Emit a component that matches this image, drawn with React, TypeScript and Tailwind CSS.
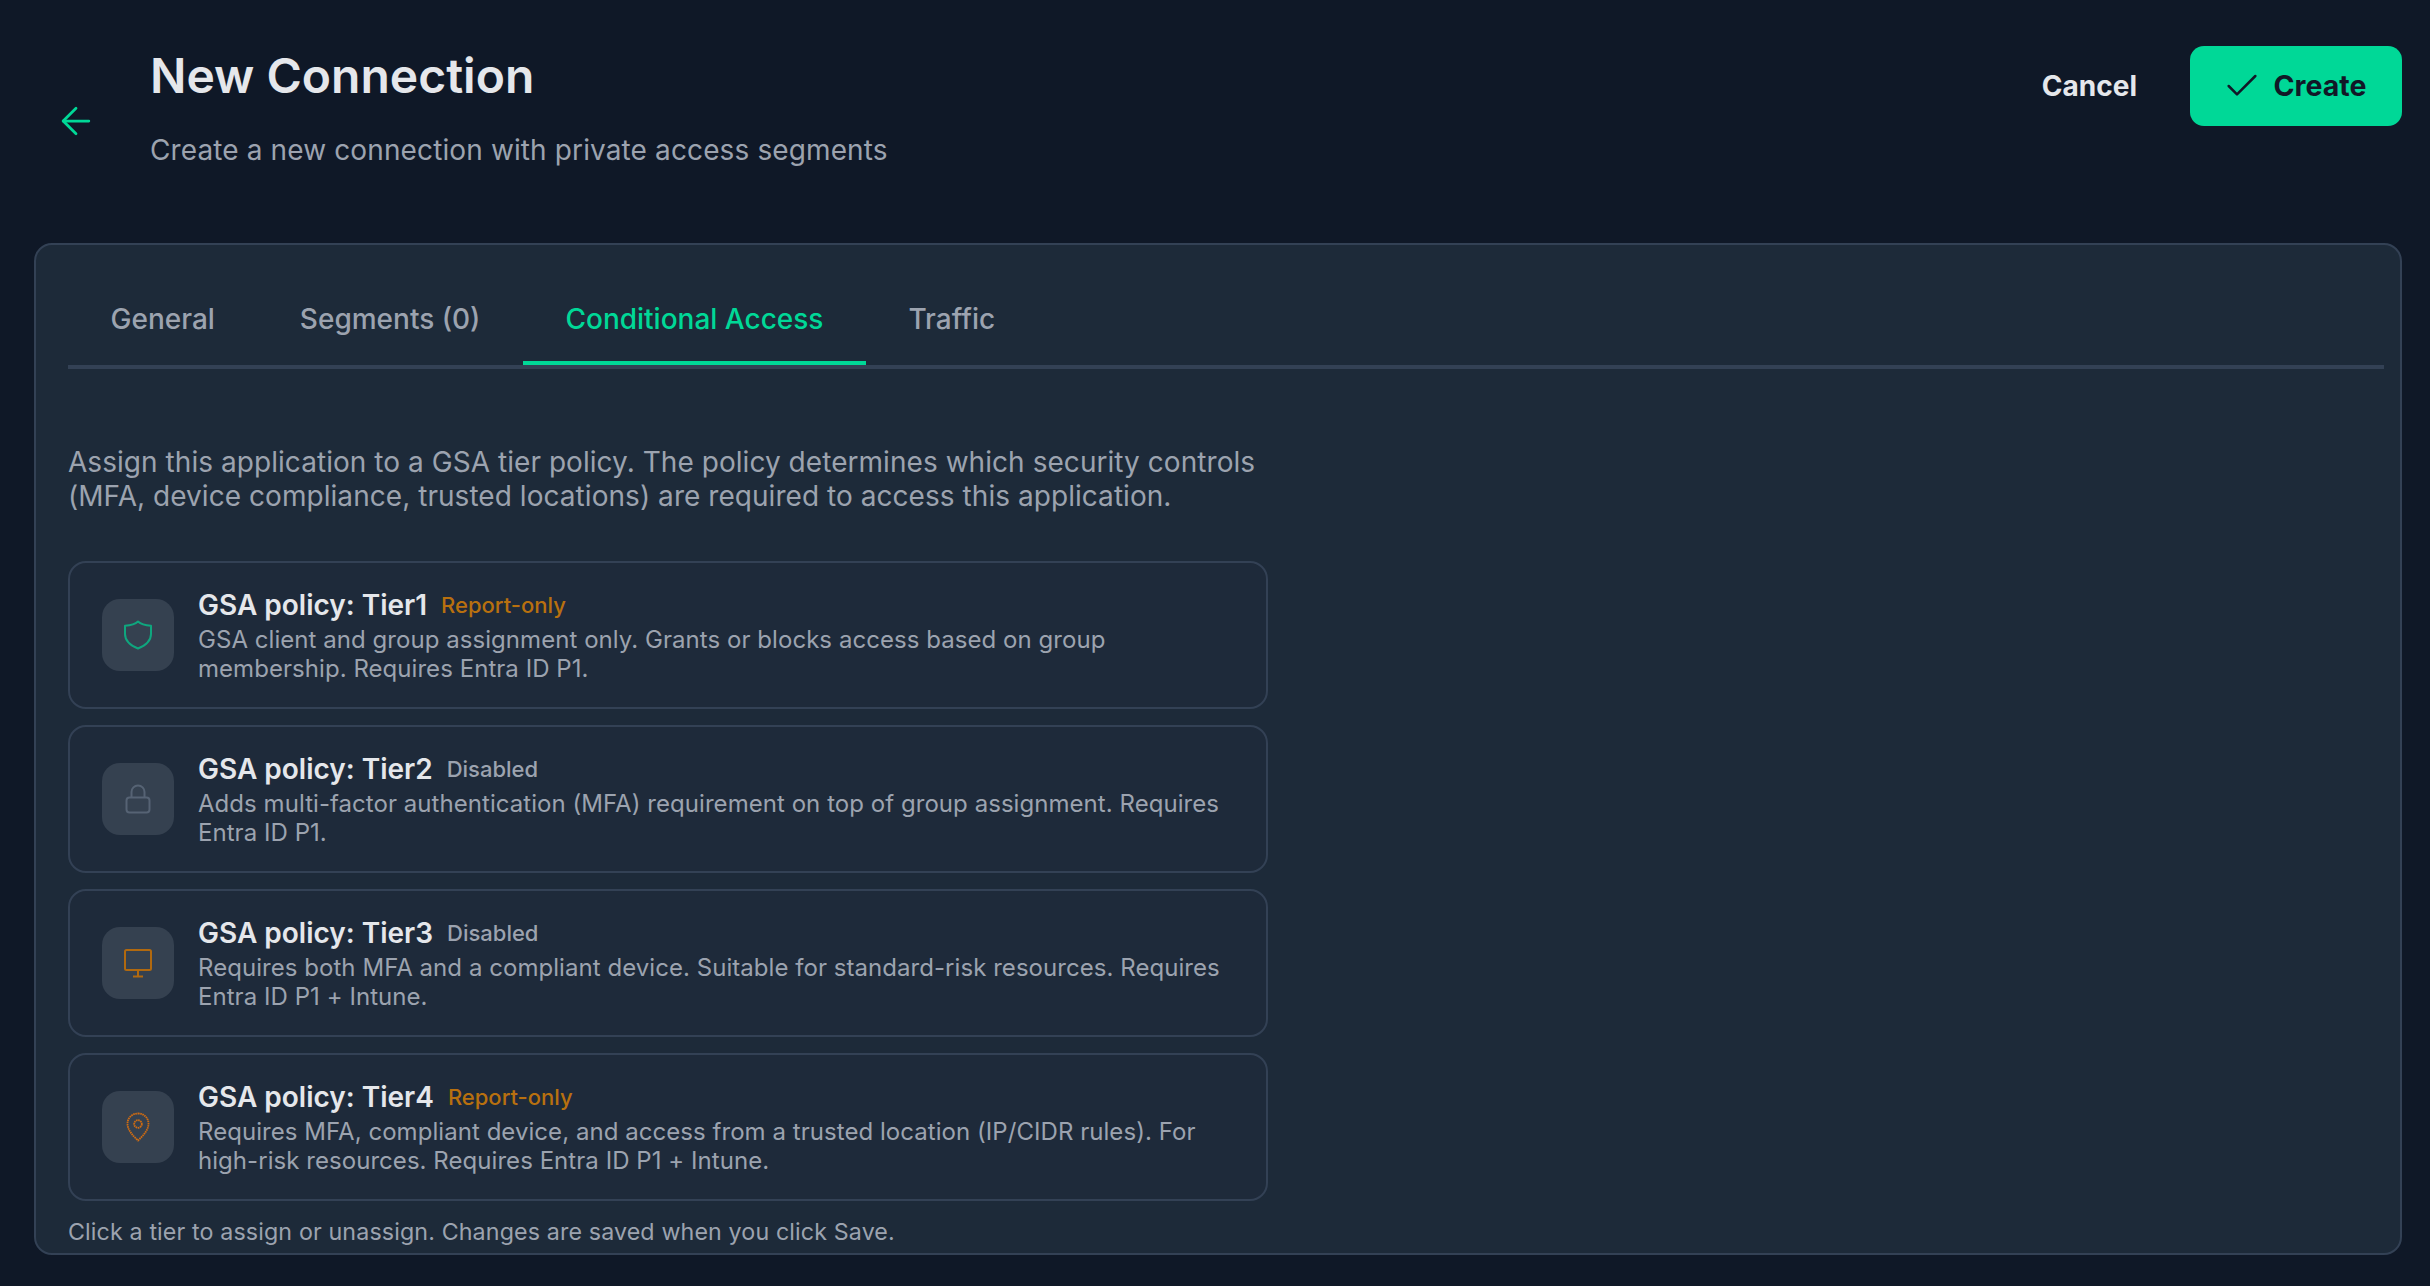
import { ArrowLeft, Check } from 'lucide-react';
import type { ReactNode } from 'react';

const tabs = [
  { label: 'General', active: false },
  { label: 'Segments (0)', active: false },
  { label: 'Conditional Access', active: true },
  { label: 'Traffic', active: false },
];

const ShieldIcon = () => (
  <svg className="w-[30px] h-[30px] text-[#0fa67e]" viewBox="0 0 30 30" fill="none" stroke="currentColor" strokeWidth="2" strokeLinejoin="round">
    <path d="M15 1.500c3 2.800 7.500 3.800 13 4.200V14c0 6.600-5.400 11.400-13 14.500C7.400 25.400 2 20.600 2 14V5.700C7.500 5.300 12 4.300 15 1.500z" />
  </svg>
);

const LockIcon = () => (
  <svg className="w-[30px] h-[30px] text-[#566374]" viewBox="0 0 30 30" fill="none" stroke="currentColor" strokeWidth="2" strokeLinejoin="round">
    <rect x="3.500" y="13.500" width="23" height="15" rx="3" />
    <path d="M8.500 13.500V8a6.500 6.500 0 0 1 13 0v5.500" />
  </svg>
);

const MonitorIcon = () => (
  <svg className="w-[30px] h-[30px] text-[#b1690f]" viewBox="0 0 30 30" fill="none" stroke="currentColor" strokeWidth="2" strokeLinejoin="round">
    <rect x="2" y="2" width="26" height="20" rx="1.500" />
    <path d="M15 22v6M10 28.500h10" />
  </svg>
);

const PinIcon = () => (
  <svg className="w-[30px] h-[30px] text-[#d06c12]" viewBox="0 0 30 30" fill="none" stroke="currentColor" strokeWidth="1.800" strokeDasharray="1.600 0.600">
    <path d="M15 1.500c6 0 10.500 4.400 10.500 10.200 0 6-5 11.800-10.500 16.800C9.500 23.500 4.500 17.700 4.500 11.700 4.500 5.900 9 1.500 15 1.500z" />
    <circle cx="15" cy="12" r="3.800" />
  </svg>
);

type Tier = {
  name: string;
  status: string;
  statusClass: string;
  desc: string;
  icon: ReactNode;
};

const tiers: Tier[] = [
  {
    name: 'GSA policy: Tier1',
    status: 'Report-only',
    statusClass: 'text-[#b8700f]',
    desc: 'GSA client and group assignment only. Grants or blocks access based on group membership. Requires Entra ID P1.',
    icon: <ShieldIcon />,
  },
  {
    name: 'GSA policy: Tier2',
    status: 'Disabled',
    statusClass: 'text-[#9ca3af]',
    desc: 'Adds multi-factor authentication (MFA) requirement on top of group assignment. Requires Entra ID P1.',
    icon: <LockIcon />,
  },
  {
    name: 'GSA policy: Tier3',
    status: 'Disabled',
    statusClass: 'text-[#9ca3af]',
    desc: 'Requires both MFA and a compliant device. Suitable for standard-risk resources. Requires Entra ID P1 + Intune.',
    icon: <MonitorIcon />,
  },
  {
    name: 'GSA policy: Tier4',
    status: 'Report-only',
    statusClass: 'text-[#b8700f]',
    desc: 'Requires MFA, compliant device, and access from a trusted location (IP/CIDR rules). For high-risk resources. Requires Entra ID P1 + Intune.',
    icon: <PinIcon />,
  },
];

export default function App() {
  return (
    <div className="h-[1286px] w-[2430px] overflow-hidden bg-[#0f1827] pl-[34px] pr-[28px] font-['Inter','Liberation_Sans',sans-serif] font-features-['cv11','ss03']">
      {/* Header */}
      <header className="flex h-[243px] items-start justify-between">
        <div className="flex items-start">
          <button className="ml-[20px] mt-[99px] text-[#00d897]">
            <ArrowLeft size={44} strokeWidth={1.5} />
          </button>
          <div className="ml-[52px] mt-[47px]">
            <h1 className="text-[48px] font-semibold leading-[58px] text-[#e5e7eb]">New Connection</h1>
            <p className="mt-[27px] text-[28px] leading-[36px] tracking-[0.12px] text-[#9ca3af]">
              Create a new connection with private access segments
            </p>
          </div>
        </div>
        <div className="mt-[46px] flex items-center gap-[53px]">
          <button className="text-[28px] font-bold text-[#e5e7eb]">Cancel</button>
          <button className="flex h-[80px] w-[212px] items-center justify-center gap-[12px] rounded-[14px] bg-[#00d897] pr-[4px] text-[28.5px] font-bold text-[#111827]">
            <Check size={40} strokeWidth={1.5} />
            Create
          </button>
        </div>
      </header>

      {/* Panel */}
      <section className="h-[1012px] rounded-[18px] border-2 border-[#334155] bg-[#1d2a39] pl-[32px] pr-[16px]">
        <div className="flex border-b-4 border-[#334155] pt-[54px]">
          {tabs.map((tab) => (
            <div
              key={tab.label}
              className={
                tab.active
                  ? 'border-b-4 border-[#00d897] px-[42.5px] pb-[22px] text-[28px] font-medium leading-[40px] text-[#00d897]'
                  : 'border-b-4 border-transparent px-[42.5px] pb-[22px] text-[28px] font-medium leading-[40px] text-[#9ca3af]'
              }
            >
              {tab.label}
            </div>
          ))}
        </div>

        <p className="mt-[76px] w-[1200px] text-[28px] leading-[34px] tracking-[0.05px] text-[#9ca3af]">
          Assign this application to a GSA tier policy. The policy determines which security controls (MFA, device
          compliance, trusted locations) are required to access this application.
        </p>

        <div className="mt-[48px] flex w-[1200px] flex-col gap-[16px]">
          {tiers.map((tier) => (
            <div
              key={tier.name}
              className="flex h-[148px] items-center gap-[24px] rounded-[18px] border-2 border-[#334155] bg-[#1e2a3a] pl-[32px] pr-[40px]"
            >
              <div className="flex h-[72px] w-[72px] shrink-0 items-center justify-center rounded-[18px] bg-[#354150]">
                {tier.icon}
              </div>
              <div className="min-w-0 pb-[1px]">
                <div className="mb-[2px] flex items-center gap-[14px]">
                  <span className="text-[28px] font-semibold leading-[36px] text-[#e5e7eb]">{tier.name}</span>
                  <span className={`text-[22px] font-medium leading-[36px] ${tier.statusClass}`}>{tier.status}</span>
                </div>
                <p className="text-[24px] leading-[29px] tracking-[0.05px] text-[#9ca3af]">{tier.desc}</p>
              </div>
            </div>
          ))}
        </div>

        <p className="mt-[16px] text-[23.25px] leading-[30px] tracking-[0.12px] text-[#9ca3af]">
          Click a tier to assign or unassign. Changes are saved when you click Save.
        </p>
      </section>
    </div>
  );
}
